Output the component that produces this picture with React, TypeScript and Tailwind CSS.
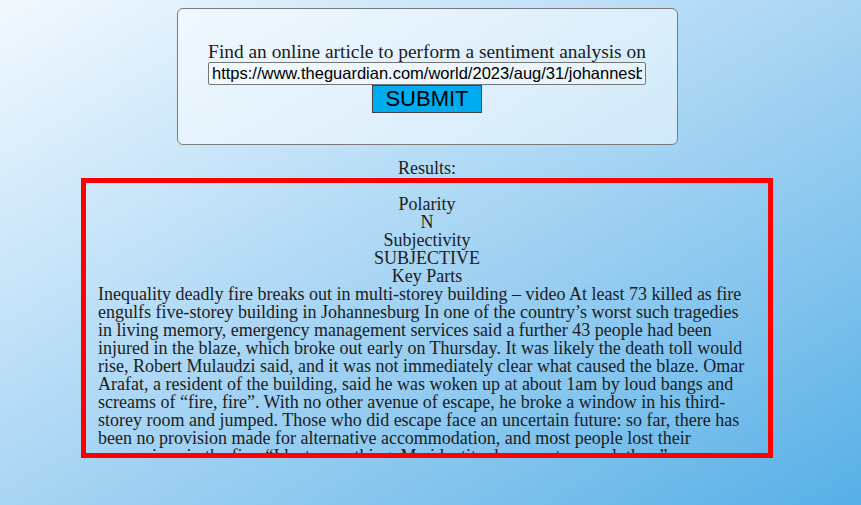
const article =
  'Inequality deadly fire breaks out in multi-storey building – video At least 73 killed as fire engulfs five-storey building in Johannesburg In one of the country’s worst such tragedies in living memory, emergency management services said a further 43 people had been injured in the blaze, which broke out early on Thursday. It was likely the death toll would rise, Robert Mulaudzi said, and it was not immediately clear what caused the blaze. Omar Arafat, a resident of the building, said he was woken up at about 1am by loud bangs and screams of “fire, fire”. With no other avenue of escape, he broke a window in his third-storey room and jumped. Those who did escape face an uncertain future: so far, there has been no provision made for alternative accommodation, and most people lost their possessions in the fire. “I lost everything. My identity documents, my clothes,” one survivor said.';

function App() {
  return (
    <main className="min-h-screen w-full bg-gradient-to-br from-[#f2f9ff] to-[#55b0e6] font-['Liberation_Serif',serif] text-[#1c1c1c]">
      <div className="flex flex-col items-center pr-[7px]">
        <form
          onSubmit={e => e.preventDefault()}
          className="mt-2 flex h-[137px] w-[501px] flex-col items-center justify-center rounded-md border border-[#7a7a7a] bg-white/50"
        >
          <label htmlFor="url" className="text-[19.4px] leading-[21px]">
            Find an online article to perform a sentiment analysis on
          </label>
          <input
            id="url"
            type="text"
            defaultValue="https://www.theguardian.com/world/2023/aug/31/johannesburg-fire-building"
            className="h-[23px] w-[438px] rounded-[2px] border border-[#767676] bg-white/40 px-[3px] font-['Liberation_Sans',sans-serif] text-[16.5px] text-black outline-none"
          />
          <button
            type="submit"
            className="h-[28px] w-[110px] border border-[#444] bg-[#00acf0] font-['Liberation_Sans',sans-serif] text-[22px] leading-none text-black"
          >
            SUBMIT
          </button>
        </form>

        <p className="mt-[14px] text-[18px] leading-[18px]">Results:</p>

        <section className="mt-px h-[280px] w-[692px] overflow-hidden border-[5px] border-[#ff0000] px-3 pt-[12px] text-[18px] leading-[18px]">
          <div className="text-center">
            <div>Polarity</div>
            <div>N</div>
            <div>Subjectivity</div>
            <div>SUBJECTIVE</div>
            <div>Key Parts</div>
          </div>
          <p>{article}</p>
        </section>
      </div>
    </main>
  );
}

export default App;
